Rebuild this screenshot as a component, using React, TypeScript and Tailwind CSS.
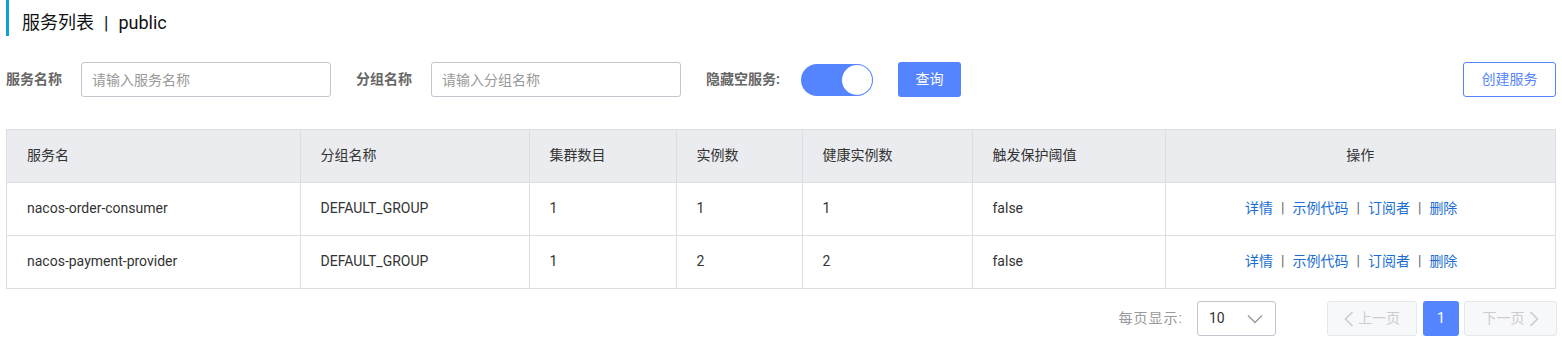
import React, { useState } from 'react';

interface Service {
  name: string;
  group: string;
  clusters: number;
  instances: number;
  healthy: number;
  threshold: string;
}

const services: Service[] = [
  { name: 'nacos-order-consumer', group: 'DEFAULT_GROUP', clusters: 1, instances: 1, healthy: 1, threshold: 'false' },
  { name: 'nacos-payment-provider', group: 'DEFAULT_GROUP', clusters: 1, instances: 2, healthy: 2, threshold: 'false' },
];

const font = { fontFamily: 'Roboto, "Noto Sans CJK SC", "Liberation Sans", sans-serif' };

const App: React.FC = () => {
  const [serviceName, setServiceName] = useState('');
  const [groupName, setGroupName] = useState('');
  const [hideEmpty, setHideEmpty] = useState(true);

  return (
    <div className="w-[1562px] h-[352px] bg-white text-[#333]" style={font}>
      {/* Title */}
      <div className="ml-[6px] h-[36px] border-l-[3px] border-[#0aa1d8] pl-[13px] flex items-center text-[18px] text-[#111] pt-[8px]">
        <span>服务列表</span>
        <span className="mx-[10px]">|</span>
        <span>public</span>
      </div>

      {/* Filters */}
      <div className="mt-[26px] px-[6px] flex items-center h-[35px]">
        <label className="text-[14px] font-bold text-[#666] w-[75px]">服务名称</label>
        <input
          value={serviceName}
          onChange={(e) => setServiceName(e.target.value)}
          placeholder="请输入服务名称"
          className="w-[250px] h-[35px] border border-[#c4c6cf] rounded-[3px] px-[10px] text-[14px] placeholder:text-[#999] outline-none"
        />
        <label className="ml-[25px] text-[14px] font-bold text-[#666] w-[75px]">分组名称</label>
        <input
          value={groupName}
          onChange={(e) => setGroupName(e.target.value)}
          placeholder="请输入分组名称"
          className="w-[250px] h-[35px] border border-[#c4c6cf] rounded-[3px] px-[10px] text-[14px] placeholder:text-[#999] outline-none"
        />
        <label className="ml-[25px] text-[14px] font-bold text-[#666] w-[95px]">隐藏空服务:</label>
        <button
          onClick={() => setHideEmpty(!hideEmpty)}
          className={`w-[72px] h-[32px] rounded-full flex items-center p-[1px] ${hideEmpty ? 'bg-[#5584ff] justify-end' : 'bg-[#c4c6cf] justify-start'}`}
        >
          <span className="w-[30px] h-[30px] rounded-full bg-white" />
        </button>
        <button className="ml-[25px] w-[63px] h-[35px] rounded-[3px] bg-[#5584ff] text-white text-[14px]">查询</button>
        <div className="flex-1" />
        <button className="w-[93px] h-[35px] rounded-[3px] border border-[#5584ff] text-[#5584ff] text-[14px] bg-white">创建服务</button>
      </div>

      {/* Table */}
      <div className="mt-[32px] mx-[6px] border border-[#dcdee3]">
        <table className="w-full table-fixed border-collapse text-[14px]">
          <colgroup>
            <col className="w-[293px]" />
            <col className="w-[229px]" />
            <col className="w-[147px]" />
            <col className="w-[126px]" />
            <col className="w-[170px]" />
            <col className="w-[193px]" />
            <col />
          </colgroup>
          <thead>
            <tr className="bg-[#ebecf0] h-[52px] text-[#333]">
              <th className="font-normal text-left pl-[20px] border-r border-[#dcdee3]">服务名</th>
              <th className="font-normal text-left pl-[20px] border-r border-[#dcdee3]">分组名称</th>
              <th className="font-normal text-left pl-[20px] border-r border-[#dcdee3]">集群数目</th>
              <th className="font-normal text-left pl-[20px] border-r border-[#dcdee3]">实例数</th>
              <th className="font-normal text-left pl-[20px] border-r border-[#dcdee3]">健康实例数</th>
              <th className="font-normal text-left pl-[20px] border-r border-[#dcdee3]">触发保护阈值</th>
              <th className="font-normal text-center">操作</th>
            </tr>
          </thead>
          <tbody>
            {services.map((s) => (
              <tr key={s.name} className="h-[53px] border-t border-[#dcdee3]">
                <td className="pl-[20px] border-r border-[#dcdee3]">{s.name}</td>
                <td className="pl-[20px] border-r border-[#dcdee3]">{s.group}</td>
                <td className="pl-[20px] border-r border-[#dcdee3]">{s.clusters}</td>
                <td className="pl-[20px] border-r border-[#dcdee3]">{s.instances}</td>
                <td className="pl-[20px] border-r border-[#dcdee3]">{s.healthy}</td>
                <td className="pl-[20px] border-r border-[#dcdee3]">{s.threshold}</td>
                <td className="text-center pr-[18px]">
                  <a className="text-[#1a6ed2] cursor-pointer">详情</a>
                  <span className="mx-[8px] text-[#666]">|</span>
                  <a className="text-[#1a6ed2] cursor-pointer">示例代码</a>
                  <span className="mx-[8px] text-[#666]">|</span>
                  <a className="text-[#1a6ed2] cursor-pointer">订阅者</a>
                  <span className="mx-[8px] text-[#666]">|</span>
                  <a className="text-[#1a6ed2] cursor-pointer">删除</a>
                </td>
              </tr>
            ))}
          </tbody>
        </table>
      </div>

      {/* Pagination */}
      <div className="mt-[12px] px-[5px] flex items-center justify-end h-[35px]">
        <span className="text-[14px] text-[#999] mr-[14px] tracking-[1px]">每页显示:</span>
        <div className="w-[79px] h-[35px] border border-[#c4c6cf] rounded-[3px] flex items-center justify-between pl-[11px] pr-[12px] text-[14px] text-[#333]">
          <span>10</span>
          <svg width="16" height="10" viewBox="0 0 16 10" fill="none" stroke="#999" strokeWidth="1.4">
            <path d="M1 1.5 L8 8.5 L15 1.5" />
          </svg>
        </div>
        <button className="ml-[51px] w-[90px] h-[35px] rounded-[3px] border border-[#e6e7eb] bg-[#f7f8fa] text-[#ccc] text-[14px] flex items-center justify-center gap-[4px]">
          <svg width="10" height="16" viewBox="0 0 10 16" fill="none" stroke="#ccc" strokeWidth="1.6">
            <path d="M8.5 1 L1.5 8 L8.5 15" />
          </svg>
          上一页
        </button>
        <button className="ml-[6px] w-[36px] h-[35px] rounded-[3px] bg-[#5584ff] text-white text-[14px]">1</button>
        <button className="ml-[5px] w-[93px] h-[35px] rounded-[3px] border border-[#e6e7eb] bg-[#f7f8fa] text-[#ccc] text-[14px] flex items-center justify-center gap-[4px]">
          下一页
          <svg width="10" height="16" viewBox="0 0 10 16" fill="none" stroke="#ccc" strokeWidth="1.6">
            <path d="M1.5 1 L8.5 8 L1.5 15" />
          </svg>
        </button>
      </div>
    </div>
  );
};

export default App;
